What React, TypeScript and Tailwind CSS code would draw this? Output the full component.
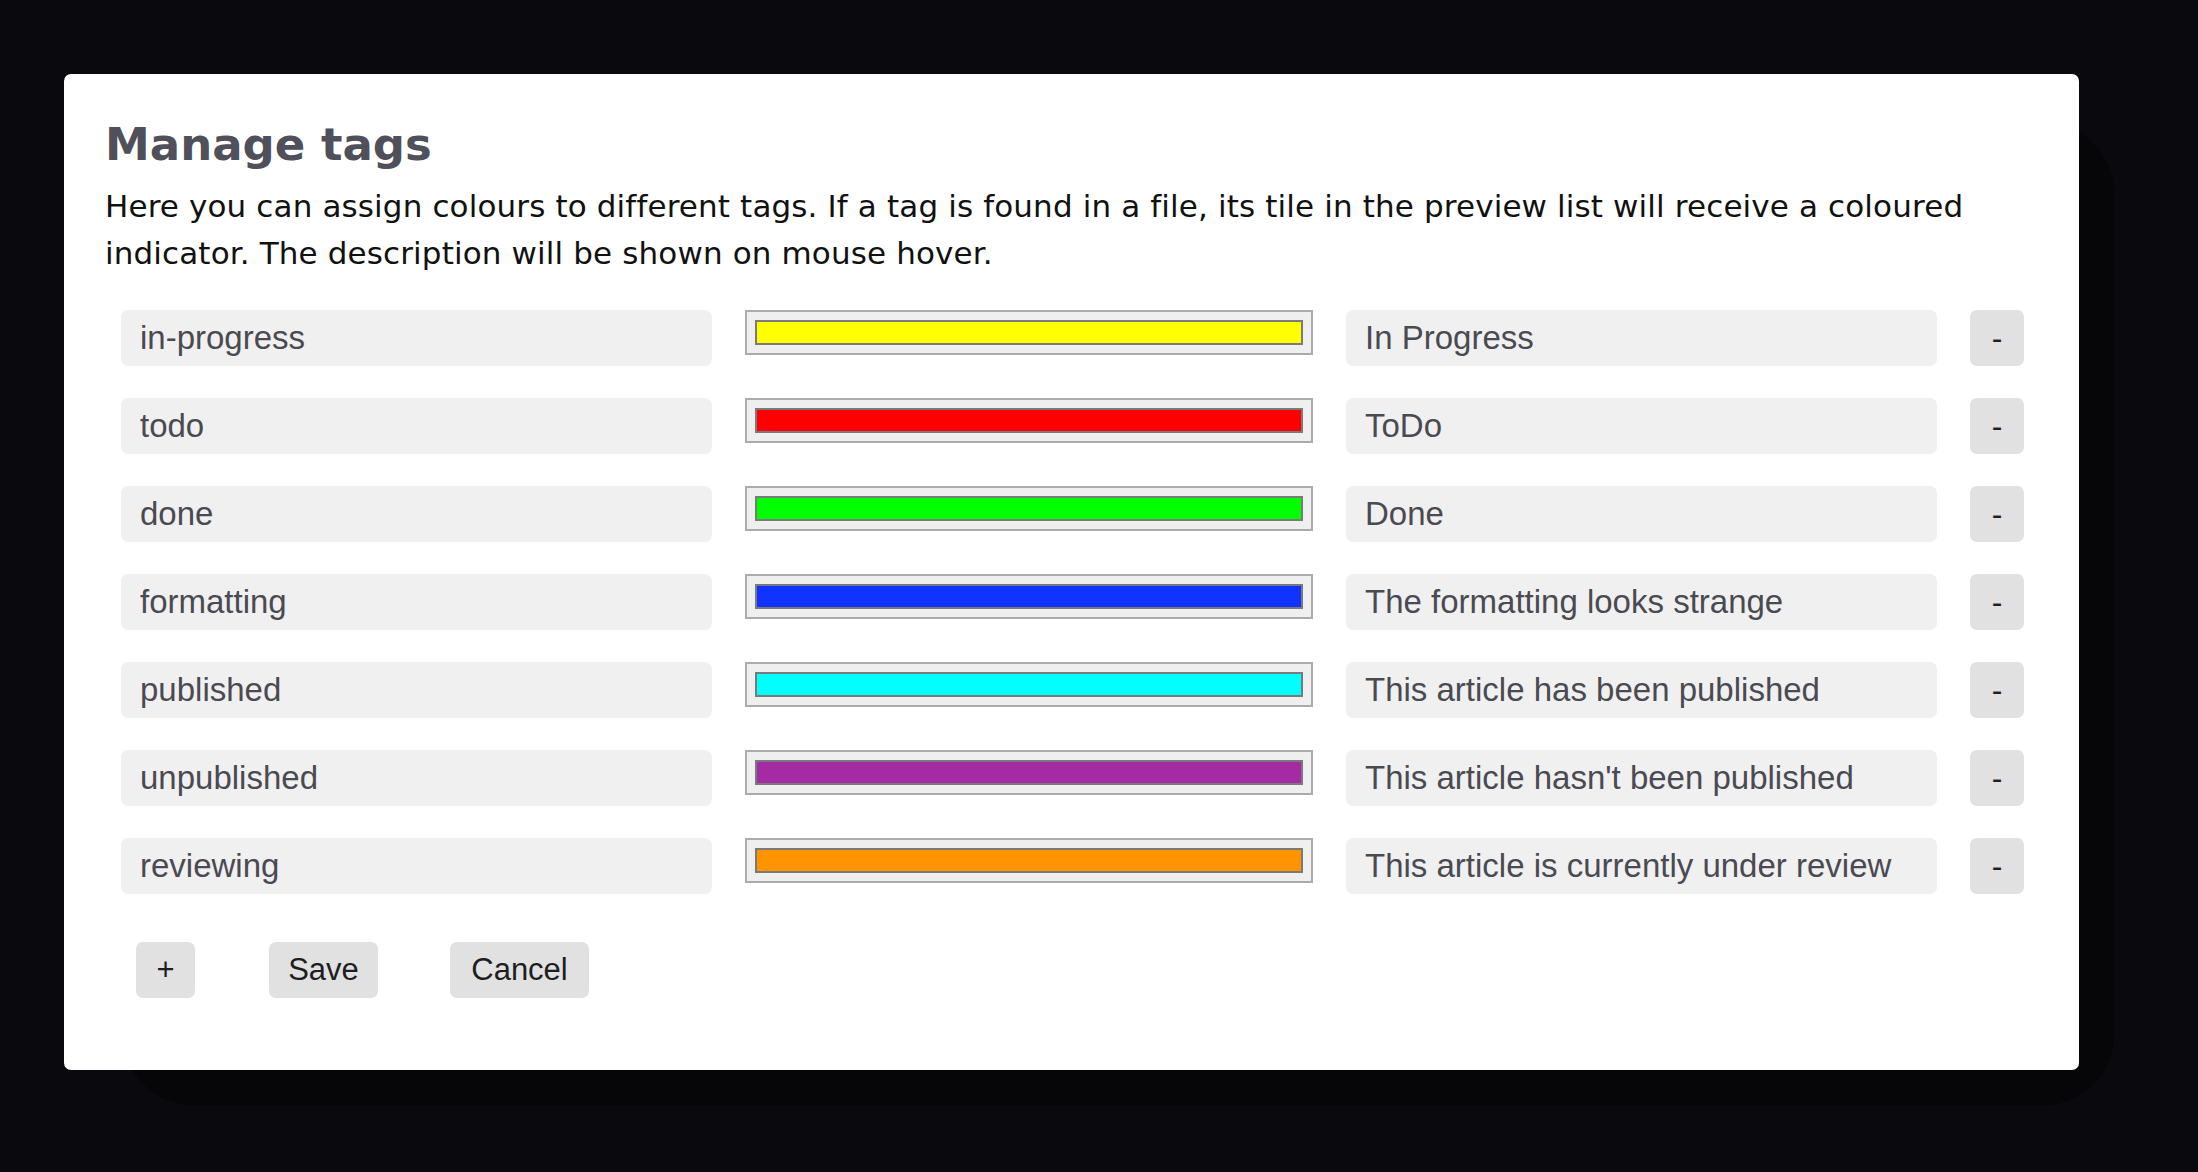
import React from "react";

const rows = [
  { tag: "in-progress", color: "#ffff00", desc: "In Progress" },
  { tag: "todo", color: "#ff0000", desc: "ToDo" },
  { tag: "done", color: "#00ff00", desc: "Done" },
  { tag: "formatting", color: "#1033ff", desc: "The formatting looks strange" },
  { tag: "published", color: "#00ffff", desc: "This article has been published" },
  { tag: "unpublished", color: "#a52ba5", desc: "This article hasn't been published" },
  { tag: "reviewing", color: "#ff9400", desc: "This article is currently under review" },
];

const inputCls =
  "h-[56px] rounded-[7px] bg-[#f0f0f0] pl-[19px] flex items-center text-[33px] text-[#4a4a52] font-['Liberation_Sans',Arial,sans-serif] whitespace-nowrap overflow-hidden";

const btnCls =
  "h-[56px] rounded-[7px] bg-[#e1e1e1] flex items-center justify-center text-[31px] text-[#1e1e22] font-['Liberation_Sans',Arial,sans-serif]";

export default function App() {
  return (
    <div className="min-h-screen w-full bg-[#0a0a0e] pl-[64px] pt-[74px]">
      <div className="relative w-[2015px]">
        <div className="absolute top-[49px] left-[59px] -right-[35px] -bottom-[35px] rounded-[70px] bg-[#060608]" />
        <div className="relative rounded-[7px] bg-white pl-[41px] pr-[41px] pt-[45px] pb-[72px]">
          <h1 className="text-[45px] leading-[52px] font-bold text-[#50505a] font-['DejaVu_Sans',sans-serif]">
            Manage tags
          </h1>
          <p className="mt-[12px] text-[31px] leading-[47px] text-[#111111] font-['DejaVu_Sans',sans-serif] tracking-[0.13px] whitespace-nowrap">
            Here you can assign colours to different tags. If a tag is found in a file, its tile in the preview list will receive a coloured
            <br />
            indicator. The description will be shown on mouse hover.
          </p>
          <div className="mt-[33px] ml-[16px] grid grid-cols-[591px_568px_591px_54px] gap-x-[33px] gap-y-[32px] items-start">
            {rows.map((r) => (
              <React.Fragment key={r.tag}>
                <div className={inputCls}>{r.tag}</div>
                <div className="h-[45px] border-2 border-[#acacac] bg-[#efefef] p-[8px]">
                  <div
                    className="h-full w-full border-2 border-[#7a7a7a]"
                    style={{ backgroundColor: r.color }}
                  />
                </div>
                <div className={inputCls}>{r.desc}</div>
                <div className={btnCls + " text-[32px]"}>-</div>
              </React.Fragment>
            ))}
          </div>
          <div className="mt-[48px] ml-[31px] flex items-center">
            <div className={btnCls + " w-[59px]"}>+</div>
            <div className={btnCls + " w-[109px] ml-[74px]"}>Save</div>
            <div className={btnCls + " w-[139px] ml-[72px]"}>Cancel</div>
          </div>
        </div>
      </div>
    </div>
  );
}
